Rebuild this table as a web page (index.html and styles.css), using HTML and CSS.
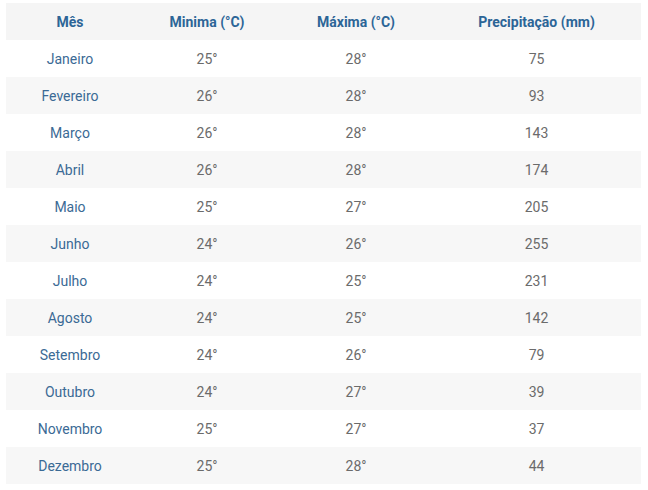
FILE: index.html
```html
<!DOCTYPE html>
<html lang="pt">
<head>
<meta charset="utf-8">
<link rel="stylesheet" href="styles.css">
</head>
<body>
<div class="wrap">
<table class="clima">
<colgroup><col class="c1"><col class="c2"><col class="c3"><col class="c4"></colgroup>
<thead>
<tr><th>Mês</th><th>Minima (°C)</th><th>Máxima (°C)</th><th>Precipitação (mm)</th></tr>
</thead>
<tbody>
<tr><td class="m">Janeiro</td><td>25°</td><td>28°</td><td>75</td></tr>
<tr><td class="m">Fevereiro</td><td>26°</td><td>28°</td><td>93</td></tr>
<tr><td class="m">Março</td><td>26°</td><td>28°</td><td>143</td></tr>
<tr><td class="m">Abril</td><td>26°</td><td>28°</td><td>174</td></tr>
<tr><td class="m">Maio</td><td>25°</td><td>27°</td><td>205</td></tr>
<tr><td class="m">Junho</td><td>24°</td><td>26°</td><td>255</td></tr>
<tr><td class="m">Julho</td><td>24°</td><td>25°</td><td>231</td></tr>
<tr><td class="m">Agosto</td><td>24°</td><td>25°</td><td>142</td></tr>
<tr><td class="m">Setembro</td><td>24°</td><td>26°</td><td>79</td></tr>
<tr><td class="m">Outubro</td><td>24°</td><td>27°</td><td>39</td></tr>
<tr><td class="m">Novembro</td><td>25°</td><td>27°</td><td>37</td></tr>
<tr><td class="m">Dezembro</td><td>25°</td><td>28°</td><td>44</td></tr>
</tbody>
</table>
</div>
</body>
</html>
```
FILE: styles.css
```css
html, body { margin: 0; padding: 0; background: #fff; }
.wrap { padding: 3px 7px 6px 6px; }
.clima {
  width: 635px;
  border-collapse: collapse;
  table-layout: fixed;
  font-family: Roboto, "Liberation Sans", sans-serif;
  font-size: 14px;
}
.c1 { width: 128px; }
.c2 { width: 146px; }
.c3 { width: 152px; }
.c4 { width: 209px; }
.clima th, .clima td {
  height: 37px;
  padding: 0;
  text-align: center;
  vertical-align: middle;
}
.clima th {
  background: #f5f5f5;
  color: #2c6597;
  font-weight: 700;
}
.clima td { color: #6b6b6b; }
.clima td.m { color: #3b6a95; }
.clima tbody tr:nth-child(even) td { background: #f7f7f7; }
```
